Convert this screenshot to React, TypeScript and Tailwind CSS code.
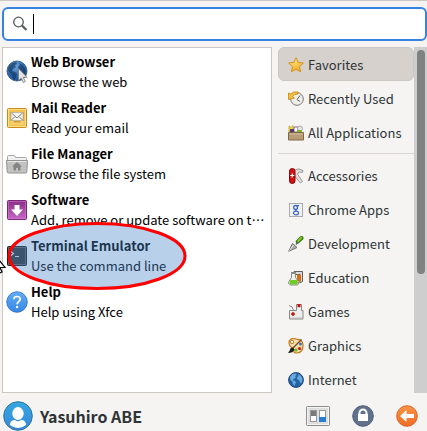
import type { ReactNode } from "react";

const BrowserIcon = () => (
  <svg width="22" height="24" viewBox="0 0 22 24" aria-hidden="true">
    <defs>
      <radialGradient id="browserGlobe" cx=".4" cy=".25" r=".8">
        <stop offset="0" stopColor="#6fa8dc" />
        <stop offset=".6" stopColor="#2c6cb0" />
        <stop offset="1" stopColor="#1c4a86" />
      </radialGradient>
    </defs>
    <circle cx="11" cy="11" r="10" fill="url(#browserGlobe)" stroke="#274f80" strokeWidth=".8" />
    <path d="M3 6l3-3 4-1 1 2-2 1 1 2-3 2-1 2 3 1 2 2-1 3-2 3-2-4-2-3-2-3zM13 3l4 2 2 3 1 4-2 3-2-4-3-1-1-3 2-2z" fill="#173864" opacity=".7" />
    <path d="M12.500 8.500v12l2.800-2.300 2 4.300 2-1-2-4.200h3.700z" fill="#e4e4e4" stroke="#777" strokeWidth=".8" />
  </svg>
);

const MailIcon = () => (
  <svg width="22" height="22" viewBox="0 0 22 22" aria-hidden="true">
    <rect x="1.500" y="1.500" width="19" height="19" rx="1" fill="#f6c04c" stroke="#c98b13" />
    <rect x="2.500" y="2.500" width="17" height="17" fill="none" stroke="#fbe08f" />
    <path d="M4 5h14v9h-3l-1 2H8l-1-2H4z" fill="#d9a02e" />
    <path d="M5 5.500h12v8H5z" fill="#f2f2ee" stroke="#b9b5a8" strokeWidth=".8" />
    <path d="M5.500 6l5.500 5 5.500-5M5.500 13l3.500-3.500M16.500 13L13 9.500" fill="none" stroke="#85857f" />
    <path d="M4 14h3l1 1.500h6l1-1.500h3v4H4z" fill="#f5cd6d" />
  </svg>
);

const FolderIcon = () => (
  <svg width="22" height="20" viewBox="0 0 22 20" aria-hidden="true">
    <path d="M1.500 8V2.500Q1.500 1.500 2.500 1.500H8Q9 1.500 9.500 3.500H19.500Q20.500 3.500 20.500 4.500V8" fill="#f1f1f1" stroke="#a9a9a9" />
    <path d="M.5 6.500h21l-.7 11.500Q20.700 19 19.500 19h-17Q1.300 19 1.200 18z" fill="#c2c2c0" stroke="#929292" />
    <path d="M1.500 7.500h19" stroke="#e7e7e7" />
    <path d="M11 8l5 4.500h-1.500V16.500h-2.500v-2.500h-2v2.500H7.500v-4H6z" fill="#858585" />
  </svg>
);

const SoftwareIcon = () => (
  <svg width="22" height="22" viewBox="0 0 22 22" aria-hidden="true">
    <defs>
      <linearGradient id="software" x2="0" y2="1">
        <stop stopColor="#8a2d86" />
        <stop offset="1" stopColor="#c867c5" />
      </linearGradient>
    </defs>
    <rect x="1.500" y="1.500" width="19" height="19" rx="1" fill="url(#software)" stroke="#7a2778" />
    <path d="M2.500 19.500v-17h17v17z" fill="none" stroke="#d17bce" strokeOpacity=".6" />
    <path d="M8.500 6h5v4.500H17L11 17l-6-6.500h3.500z" fill="#fff" />
  </svg>
);

const TerminalIcon = () => (
  <svg width="22" height="22" viewBox="0 0 22 22" aria-hidden="true">
    <rect x="1.500" y="1.500" width="19" height="19" rx="1" fill="#353535" stroke="#1d1d1d" />
    <rect x="2.500" y="2.500" width="17" height="17" fill="none" stroke="#626262" />
    <path d="M5 6.500l2.500 2L5 10.500M9 11.500h4" fill="none" stroke="#e8e8e8" strokeWidth="1.200" />
  </svg>
);

const HelpIcon = () => (
  <svg width="22" height="22" viewBox="0 0 22 22" aria-hidden="true">
    <defs>
      <linearGradient id="help" x2="0" y2="1">
        <stop stopColor="#61adf7" />
        <stop offset="1" stopColor="#3787e4" />
      </linearGradient>
    </defs>
    <circle cx="11" cy="11" r="10.300" fill="url(#help)" stroke="#2d6fbf" strokeWidth=".8" />
    <path d="M7.800 8.200Q8 5.500 11 5.500t3.200 2.700c0 2.300-3.100 2.500-3.100 5" fill="none" stroke="#fff" strokeWidth="1.700" />
    <circle cx="11.100" cy="16" r="1.200" fill="#fff" />
  </svg>
);

const small = { width: 16, height: 16, viewBox: "0 0 16 16", className: "shrink-0", "aria-hidden": true } as const;

const StarIcon = () => (
  <svg {...small}>
    <defs>
      <linearGradient id="star" x2=".4" y2="1">
        <stop stopColor="#fff09a" />
        <stop offset="1" stopColor="#f3ae24" />
      </linearGradient>
    </defs>
    <path d="M8 .7l2.200 4.700 5.200.6-3.800 3.600 1 5.200L8 12.300l-4.600 2.500 1-5.200L.6 6l5.200-.6z" fill="url(#star)" stroke="#d6901c" strokeLinejoin="round" />
  </svg>
);

const RecentIcon = () => (
  <svg {...small}>
    <circle cx="9" cy="8" r="6.300" fill="#eeeeea" stroke="#777" />
    <path d="M12 4.500L9 8.500l3 2" fill="none" stroke="#666" />
    <path d="M10 1Q5 0 3 3L.5 2v6.500l6-1.500-2-1.500Q6 3 10 3z" fill="#f4c23b" stroke="#c28716" strokeWidth=".8" />
  </svg>
);

const AllAppsIcon = () => (
  <svg {...small}>
    <path d="M1 7V1l2 1.500L5 .5V7z" fill="#f4dc37" stroke="#b59b17" strokeWidth=".7" />
    <path d="M2 4h5v4H2z" fill="#5d3777" />
    <path d="M6 2h4v5H6z" fill="#fff" stroke="#67417e" strokeWidth=".8" />
    <circle cx="12" cy="3.500" r="2.500" fill="#e6e6e6" stroke="#999" strokeWidth=".8" />
    <path d="M9 5h5v3H9z" fill="#79b52d" />
    <path d="M.5 7.500h15v7.500H.5z" fill="#b79c75" stroke="#806746" />
    <path d="M1 9h14" stroke="#d4bf9d" />
  </svg>
);

const AccessoriesIcon = () => (
  <svg {...small}>
    <path d="M6.500 2Q11-.5 15 2.500L14.500 4.500l-3.500-.5-1.500 2 5 7.500-2 1.500-6-7z" fill="#dededb" stroke="#888" strokeWidth=".8" />
    <rect x="1.500" y=".6" width="5.500" height="14.800" rx="2.500" fill="#d21114" stroke="#8f0808" />
    <path d="M4.250 5.500v4M2.300 7.500h4" stroke="#fff" strokeWidth="1.200" />
  </svg>
);

const ChromeAppsIcon = () => (
  <svg {...small}>
    <rect x="1.500" y="1.500" width="13" height="13" fill="#f0f1f3" stroke="#a9abb0" />
    <ellipse cx="7.600" cy="5.500" rx="1.900" ry="2" fill="none" stroke="#3d66c4" strokeWidth="1.300" />
    <path d="M8 3.600h3M7.800 7.500q-.8.900.7 1.400" fill="none" stroke="#3d66c4" strokeWidth="1.200" />
    <ellipse cx="8" cy="11" rx="2.500" ry="1.900" fill="none" stroke="#3d66c4" strokeWidth="1.200" />
  </svg>
);

const DevelopmentIcon = () => (
  <svg {...small}>
    <path d="M9.800 5.700l3.700-3.700" stroke="#367506" strokeWidth="4" strokeLinecap="round" />
    <path d="M10 5.200l3.300-3.500" stroke="#80c936" strokeWidth="2" strokeLinecap="round" />
    <path d="M10 6L8 8.500" stroke="#666" strokeWidth="1.500" />
    <path d="M.7 15.300L4.500 7.500 9 11.500z" fill="#aeb0ad" stroke="#6e716d" strokeLinejoin="round" />
    <path d="M1.500 14.500l4-5.500" stroke="#e4e4e4" />
  </svg>
);

const EducationIcon = () => (
  <svg {...small}>
    <path d="M6 1.500h8.500v10L12 13V4.500H6z" fill="#d9d9d7" stroke="#60605d" />
    <path d="M9 4.500h4v7H9z" fill="#d86c13" />
    <path d="M3.500 3.500h4v4l3 4Q11.500 15 8 15H3Q-.5 14.500 1 11.500l2.500-4z" fill="#edf3e8" stroke="#858984" />
    <path d="M2.500 10h6.500l1 2.500Q10 14.500 8 14.500H3Q.8 14 1.500 12z" fill="#6fcd26" />
    <path d="M3 2.500h5" stroke="#858984" />
  </svg>
);

const GamesIcon = () => (
  <svg {...small}>
    <path d="M1 1.500Q5 2 5.500 6.500" fill="none" stroke="#888" />
    <path d="M1.500 6.500h7v-6h5v6h1.500V15h-13.500z" fill="#eeeeec" stroke="#888a85" />
    <path d="M2.500 14h12" stroke="#bbb" />
    <path d="M5 8v4M3 10h4" stroke="#c81212" strokeWidth="1.600" />
    <rect x="9.500" y="0" width="3" height="3.200" fill="#c81212" />
  </svg>
);

const GraphicsIcon = () => (
  <svg {...small}>
    <path d="M3 1Q6-.3 9 1.500q5-.5 6 5 .5 8-6 8.500-4 0-3-3-2-2-4-4Q-.5 3 3 1z" fill="#f7ddb0" stroke="#c07c1b" strokeWidth="1.200" />
    <circle cx="4" cy="4" r="1.700" fill="#fff" stroke="#c07c1b" />
    <circle cx="12.500" cy="6" r="1.500" fill="#3d71bc" />
    <circle cx="11.500" cy="10.500" r="1.600" fill="#d41717" />
    <circle cx="8" cy="12" r="1.500" fill="#65b51e" />
    <path d="M13.500 1.500L4 11" stroke="#75531f" strokeWidth="1.400" />
    <path d="M5 9.500Q2 9.500 2 12L0 15q5 0 6.500-3.500z" fill="#1e1e1e" />
  </svg>
);

const InternetIcon = () => (
  <svg {...small}>
    <circle cx="8" cy="8" r="7.400" fill="#2465a5" stroke="#1d4777" />
    <path d="M2 5l2.500-3 3.500-.5.500 1.500-1.500 1 1 1.500L5.500 7 5 8.500l2 .5 1 1.500-1 1.500-.5 2L5 12 4.500 9.500 2.500 8z" fill="#6aaade" />
    <path d="M10 2l3 2 1.500 3-.5 3-1.500 1.500-1-3L9.500 7.500 9 5.500 10.500 4z" fill="#6aaade" />
  </svg>
);

type App = { name: string; note: string; icon: ReactNode; marked?: boolean };

const apps: App[] = [
  { name: "Web Browser", note: "Browse the web", icon: <BrowserIcon /> },
  { name: "Mail Reader", note: "Read your email", icon: <MailIcon /> },
  { name: "File Manager", note: "Browse the file system", icon: <FolderIcon /> },
  { name: "Software", note: "Add, remove or update software on t…", icon: <SoftwareIcon /> },
  { name: "Terminal Emulator", note: "Use the command line", icon: <TerminalIcon />, marked: true },
  { name: "Help", note: "Help using Xfce", icon: <HelpIcon /> },
];

const views = [
  { name: "Favorites", icon: <StarIcon /> },
  { name: "Recently Used", icon: <RecentIcon /> },
  { name: "All Applications", icon: <AllAppsIcon /> },
];

const categories = [
  { name: "Accessories", icon: <AccessoriesIcon /> },
  { name: "Chrome Apps", icon: <ChromeAppsIcon /> },
  { name: "Development", icon: <DevelopmentIcon /> },
  { name: "Education", icon: <EducationIcon /> },
  { name: "Games", icon: <GamesIcon /> },
  { name: "Graphics", icon: <GraphicsIcon /> },
  { name: "Internet", icon: <InternetIcon /> },
];

function CategoryButton({ name, icon, active = false }: { name: string; icon: ReactNode; active?: boolean }) {
  return (
    <button
      type="button"
      aria-pressed={active}
      className={`flex h-[34px] w-full shrink-0 items-center gap-1 rounded-md border pt-px pl-[9px] text-left whitespace-nowrap ${
        active ? "border-[#cdc7c2] bg-[#d6d1cd]" : "border-transparent"
      }`}
    >
      {icon}
      <span>{name}</span>
    </button>
  );
}

function Marker() {
  return (
    <svg className="pointer-events-none absolute -top-3 left-1 z-10" width="182" height="70" viewBox="0 0 182 70" aria-hidden="true">
      <ellipse cx="90" cy="35" rx="88" ry="32.500" fill="#4987ca" fillOpacity=".39" stroke="#f00" strokeWidth="3" />
    </svg>
  );
}

export default function App() {
  return (
    <div
      lang="ja"
      className="flex h-screen flex-col overflow-hidden border-t border-[#cdc7c2] bg-[#f5f4f2] font-['Noto_Sans_CJK_JP','Noto_Sans',sans-serif] text-[13px] leading-5 text-[#2e3436]"
    >
      <label className="mt-1.5 ml-0.5 flex h-[34px] shrink-0 items-center rounded-md border-2 border-[#3584e4] bg-white pl-2">
        <svg width="16" height="16" viewBox="0 0 16 16" fill="none" stroke="#555b5d" aria-hidden="true">
          <circle cx="6.500" cy="6" r="4.800" strokeWidth="1.300" />
          <path d="M10 9.500l4.500 4.500" strokeWidth="2.200" />
        </svg>
        <span className="ml-[5px] h-5 w-px bg-black" />
        <input type="text" aria-label="Search applications" className="min-w-0 flex-1 bg-transparent outline-none" />
      </label>

      <main className="mt-1.5 flex min-h-0 flex-1">
        <ul className="ml-0.5 min-w-0 flex-1 border border-[#cdc7c2] bg-white pt-px text-black">
          {apps.map((app) => (
            <li key={app.name} className="relative">
              <button type="button" className="flex h-[46px] w-full items-center gap-[3px] px-[3px] text-left">
                <span className="flex w-[22px] shrink-0 justify-center">{app.icon}</span>
                <span className="min-w-0 flex-1">
                  <span className="block truncate font-bold">{app.name}</span>
                  <span className="block truncate">{app.note}</span>
                </span>
              </button>
              {app.marked && <Marker />}
            </li>
          ))}
        </ul>

        <nav aria-label="Categories" className="ml-1.5 flex w-[136px] shrink-0 flex-col overflow-hidden">
          {views.map((view, i) => (
            <CategoryButton key={view.name} {...view} active={i === 0} />
          ))}
          <hr className="my-1 border-[#dad6d2]" />
          {categories.map((category) => (
            <CategoryButton key={category.name} {...category} />
          ))}
        </nav>

        <div className="flex w-[13px] shrink-0 justify-center bg-[#cecece] pt-[3px]">
          <div className="h-[224px] w-2 rounded-full bg-[#7e8382]" />
        </div>
      </main>

      <footer className="flex h-[38px] shrink-0 items-center pt-2 pr-[9px] pl-[3px]">
        <svg width="30" height="30" viewBox="0 0 30 30" aria-hidden="true">
          <defs>
            <linearGradient id="avatar" x2="0" y2="1">
              <stop stopColor="#35a8df" />
              <stop offset="1" stopColor="#3987dc" />
            </linearGradient>
            <linearGradient id="logout" x2="0" y2="1">
              <stop stopColor="#fb9445" />
              <stop offset="1" stopColor="#f06c24" />
            </linearGradient>
          </defs>
          <circle cx="15" cy="15" r="14.300" fill="url(#avatar)" stroke="#30719e" />
          <ellipse cx="15" cy="12.500" rx="5.700" ry="6.500" fill="#fff" />
          <path d="M7 24q0-5 5-5 3 2.500 6 0 5 0 5 5-3.500 3-8 3t-8-3z" fill="#fff" />
        </svg>
        <span className="ml-[7px] flex-1 text-base font-bold whitespace-nowrap">Yasuhiro ABE</span>
        <div className="flex items-center gap-[22px]">
          <button type="button" aria-label="All Settings">
            <svg width="24" height="20" viewBox="0 0 24 20" aria-hidden="true">
              <rect x=".5" y=".5" width="23" height="19" rx="1" fill="#dedfdd" stroke="#8c8e8b" />
              <rect x="1.500" y="1.500" width="21" height="17" fill="none" stroke="#f5f5f5" />
              <rect x="4.500" y="4.500" width="6" height="11" fill="#fff" stroke="#999" />
              <path d="M5 5h5v5H5z" fill="#777b7b" />
              <rect x="13.500" y="4.500" width="6" height="11" fill="#fff" stroke="#999" />
              <path d="M13 11h7v5h-7z" fill="#2b7dd0" />
            </svg>
          </button>
          <button type="button" aria-label="Lock Screen">
            <svg width="22" height="22" viewBox="0 0 22 22" aria-hidden="true">
              <circle cx="11" cy="11" r="10.300" fill="#62718c" stroke="#4e5c77" />
              <path d="M7.500 10V8a3.500 3.500 0 0 1 7 0v2" fill="none" stroke="#fff" strokeWidth="2" />
              <rect x="6" y="9" width="10" height="7" fill="#fff" />
            </svg>
          </button>
          <button type="button" aria-label="Log Out">
            <svg width="22" height="22" viewBox="0 0 22 22" aria-hidden="true">
              <circle cx="11" cy="11" r="10.300" fill="url(#logout)" stroke="#d9652a" />
              <path d="M4 11l6.500-6v4H18v4h-7.500v4z" fill="#fff" />
            </svg>
          </button>
        </div>
      </footer>

      <svg className="pointer-events-none absolute top-[257px] left-0" width="7" height="18" viewBox="0 0 7 18" aria-hidden="true">
        <path d="M-5-2v15l2-2 2.500 5 2.500-1-2-4.500h5z" fill="#fff" stroke="#000" strokeWidth="1.200" />
      </svg>
    </div>
  );
}
